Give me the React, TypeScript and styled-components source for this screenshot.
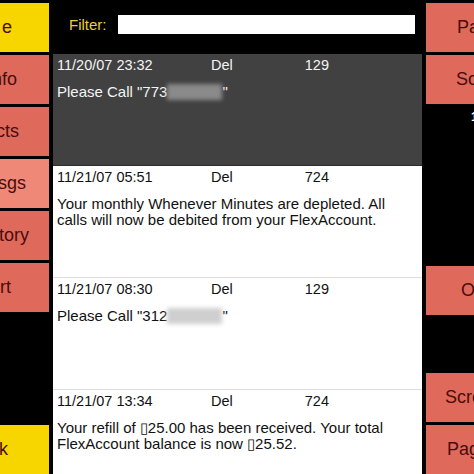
import React from "react";
import styled, { createGlobalStyle } from "styled-components";

const Global = createGlobalStyle`
  html, body { margin: 0; padding: 0; background: #000; overflow: hidden; }
  body { font-family: "Liberation Sans", Arial, sans-serif; }
`;

const Screen = styled.div`
  display: grid;
  grid-template-columns: 49px 369px 48px;
  column-gap: 4px;
  height: 474px;
  width: 474px;
  overflow: hidden;
  background: #000;
`;

const SideColumn = styled.div`
  display: flex;
  flex-direction: column;
  gap: 3px;
  padding-top: 3px;
  height: 474px;
  box-sizing: border-box;
  overflow: hidden;
`;

type Tone = "yellow" | "salmon" | "pink";
const toneBg: Record<Tone, string> = {
  yellow: "#f7d600",
  salmon: "#df6a5b",
  pink: "#f08878",
};

const SideButton = styled.div<{ $tone: Tone; $align: "end" | "start"; $inset: number }>`
  flex: 0 0 49px;
  display: flex;
  align-items: center;
  justify-content: ${(p) => (p.$align === "end" ? "flex-end" : "flex-start")};
  padding-right: ${(p) => (p.$align === "end" ? p.$inset : 0)}px;
  padding-left: ${(p) => (p.$align === "start" ? p.$inset : 0)}px;
  background: ${(p) => toneBg[p.$tone]};
  color: #4a0c0c;
  font-size: 18px;
  white-space: nowrap;
  overflow: hidden;
`;

const Slot = styled.div`
  flex: 0 0 49px;
`;

const PageIndicator = styled.div`
  flex: 0 0 49px;
  color: #fff;
  font-size: 12px;
  font-weight: bold;
  padding-left: 45px;
  padding-top: 3px;
  white-space: nowrap;
`;

const Spacer = styled.div`
  flex: 1;
`;

const Main = styled.div`
  display: flex;
  flex-direction: column;
  height: 474px;
  overflow: hidden;
`;

const FilterBar = styled.div`
  flex: 0 0 54px;
  display: flex;
  align-items: center;
  padding-left: 16px;
  gap: 11px;
  box-sizing: border-box;
  padding-bottom: 6px;
`;

const FilterLabel = styled.span`
  color: #e8cf3a;
  font-size: 15px;
`;

const FilterInput = styled.div`
  width: 297px;
  height: 19px;
  background: #fff;
`;

const List = styled.div`
  display: flex;
  flex-direction: column;
`;

const Item = styled.div<{ $selected?: boolean }>`
  flex: 0 0 112px;
  box-sizing: border-box;
  padding: 2px 0 0 4px;
  background: ${(p) => (p.$selected ? "#414141" : "#fff")};
  color: ${(p) => (p.$selected ? "#f4f4f4" : "#111")};
  border-bottom: 1px solid ${(p) => (p.$selected ? "#2c2c2c" : "#dedede")};
`;

const Meta = styled.div`
  display: grid;
  grid-template-columns: 154px 80px 38px;
  font-size: 14.5px;
  line-height: 18px;
`;

const Count = styled.span`
  text-align: right;
`;

const Message = styled.div`
  margin-top: 10px;
  font-size: 15px;
  line-height: 16px;
  padding-right: 20px;
`;

const Redacted = styled.span<{ $dark?: boolean }>`
  display: inline-block;
  vertical-align: -3px;
  width: 55px;
  height: 16px;
  background: ${(p) => (p.$dark ? "#8a8a8a" : "#cfcfcf")};
  filter: blur(2px);
`;

const left: { label: string; tone: Tone; inset: number }[] = [
  { label: "e", tone: "yellow", inset: 37 },
  { label: "nfo", tone: "salmon", inset: 32 },
  { label: "cts", tone: "salmon", inset: 30 },
  { label: "sgs", tone: "pink", inset: 23 },
  { label: "tory", tone: "salmon", inset: 20 },
  { label: "rt", tone: "salmon", inset: 38 },
];

export default function App() {
  return (
    <>
      <Global />
      <Screen>
        <SideColumn>
          {left.map((b) => (
            <SideButton key={b.label} $tone={b.tone} $align="end" $inset={b.inset}>
              {b.label}
            </SideButton>
          ))}
          <Spacer />
          <SideButton $tone="yellow" $align="end" $inset={41}>
            k
          </SideButton>
        </SideColumn>

        <Main>
          <FilterBar>
            <FilterLabel>Filter:</FilterLabel>
            <FilterInput />
          </FilterBar>
          <List>
            <Item $selected>
              <Meta>
                <span>11/20/07 23:32</span>
                <span>Del</span>
                <Count>129</Count>
              </Meta>
              <Message>
                Please Call "773<Redacted $dark />"
              </Message>
            </Item>
            <Item>
              <Meta>
                <span>11/21/07 05:51</span>
                <span>Del</span>
                <Count>724</Count>
              </Meta>
              <Message>
                Your monthly Whenever Minutes are depleted. All calls will now be debited from your FlexAccount.
              </Message>
            </Item>
            <Item>
              <Meta>
                <span>11/21/07 08:30</span>
                <span>Del</span>
                <Count>129</Count>
              </Meta>
              <Message>
                Please Call "312<Redacted />"
              </Message>
            </Item>
            <Item>
              <Meta>
                <span>11/21/07 13:34</span>
                <span>Del</span>
                <Count>724</Count>
              </Meta>
              <Message>
                Your refill of ▯25.00 has been received. Your total FlexAccount balance is now ▯25.52.
              </Message>
            </Item>
          </List>
        </Main>

        <SideColumn>
          <SideButton $tone="salmon" $align="start" $inset={31}>Pa</SideButton>
          <SideButton $tone="salmon" $align="start" $inset={30}>Sc</SideButton>
          <PageIndicator>1</PageIndicator>
          <Slot />
          <Slot />
          <SideButton $tone="salmon" $align="start" $inset={35}>O</SideButton>
          <Spacer />
          <SideButton $tone="salmon" $align="start" $inset={19}>Scre</SideButton>
          <SideButton $tone="salmon" $align="start" $inset={21}>Pag</SideButton>
        </SideColumn>
      </Screen>
    </>
  );
}
